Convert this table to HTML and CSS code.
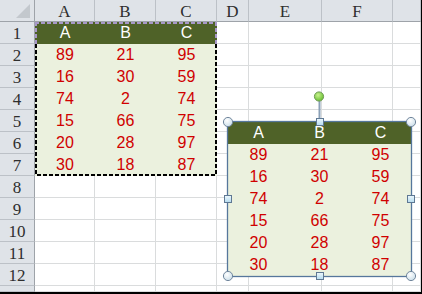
FILE: index.html
```html
<!DOCTYPE html>
<html>
<head>
<meta charset="utf-8">
<link rel="stylesheet" href="styles.css">
</head>
<body>
<div class="sheet">
  <div class="hd corner"><svg class="tri" width="15" height="14" viewBox="0 0 15 14"><polygon points="14,0 14,14 0,14" fill="#c3c8cd"/></svg></div>
  <div class="hd">A</div><div class="hd">B</div><div class="hd">C</div><div class="hd">D</div><div class="hd">E</div><div class="hd">F</div><div class="hd"></div>

  <div class="range">
    <div class="th">A</div><div class="th">B</div><div class="th">C</div>
    <div class="td">89</div><div class="td">21</div><div class="td">95</div>
    <div class="td">16</div><div class="td">30</div><div class="td">59</div>
    <div class="td">74</div><div class="td">2</div><div class="td">74</div>
    <div class="td">15</div><div class="td">66</div><div class="td">75</div>
    <div class="td">20</div><div class="td">28</div><div class="td">97</div>
    <div class="td">30</div><div class="td">18</div><div class="td">87</div>
    <svg class="ants" width="182" height="154" viewBox="0 0 182 154">
      <g fill="none" stroke-width="2" stroke-dasharray="4 2">
        <path d="M0 1 H182 M1 0 V22 M181 0 V22" stroke="#a898c8"/>
        <path d="M1 22 V153 H181 V22" stroke="#000"/>
      </g>
    </svg>
  </div>

  <div class="hd rh">1</div><div class="c"></div><div class="c"></div><div class="c"></div><div class="c"></div>
  <div class="hd rh">2</div><div class="c"></div><div class="c"></div><div class="c"></div><div class="c"></div>
  <div class="hd rh">3</div><div class="c"></div><div class="c"></div><div class="c"></div><div class="c"></div>
  <div class="hd rh">4</div><div class="c"></div><div class="c"></div><div class="c"></div><div class="c"></div>
  <div class="hd rh">5</div><div class="c"></div><div class="c"></div><div class="c"></div><div class="c"></div>
  <div class="hd rh">6</div><div class="c"></div><div class="c"></div><div class="c"></div><div class="c"></div>
  <div class="hd rh">7</div><div class="c"></div><div class="c"></div><div class="c"></div><div class="c"></div>
  <div class="hd rh">8</div><div class="c"></div><div class="c"></div><div class="c"></div><div class="c"></div><div class="c"></div><div class="c"></div><div class="c"></div>
  <div class="hd rh">9</div><div class="c"></div><div class="c"></div><div class="c"></div><div class="c"></div><div class="c"></div><div class="c"></div><div class="c"></div>
  <div class="hd rh">10</div><div class="c"></div><div class="c"></div><div class="c"></div><div class="c"></div><div class="c"></div><div class="c"></div><div class="c"></div>
  <div class="hd rh">11</div><div class="c"></div><div class="c"></div><div class="c"></div><div class="c"></div><div class="c"></div><div class="c"></div><div class="c"></div>
  <div class="hd rh">12</div><div class="c"></div><div class="c"></div><div class="c"></div><div class="c"></div><div class="c"></div><div class="c"></div><div class="c"></div>
  <div class="hd rh"></div><div class="c"></div><div class="c"></div><div class="c"></div><div class="c"></div><div class="c"></div><div class="c"></div><div class="c"></div>

  <div class="pic">
    <div class="th">A</div><div class="th">B</div><div class="th">C</div>
    <div class="td">89</div><div class="td">21</div><div class="td">95</div>
    <div class="td">16</div><div class="td">30</div><div class="td">59</div>
    <div class="td">74</div><div class="td">2</div><div class="td">74</div>
    <div class="td">15</div><div class="td">66</div><div class="td">75</div>
    <div class="td">20</div><div class="td">28</div><div class="td">97</div>
    <div class="td">30</div><div class="td">18</div><div class="td">87</div>
    <svg class="handles" width="203" height="198" viewBox="0 0 203 198">
      <defs>
        <radialGradient id="gc" cx="40%" cy="35%" r="70%">
          <stop offset="0" stop-color="#ffffff"/>
          <stop offset="1" stop-color="#c9dde8"/>
        </radialGradient>
        <linearGradient id="gs" x1="0" y1="0" x2="0" y2="1">
          <stop offset="0" stop-color="#eef8fd"/>
          <stop offset="1" stop-color="#b5dbee"/>
        </linearGradient>
        <radialGradient id="gg" cx="40%" cy="35%" r="70%">
          <stop offset="0" stop-color="#c8f28e"/>
          <stop offset="1" stop-color="#62bb2c"/>
        </radialGradient>
      </defs>
      <g transform="translate(10,34)">
        <rect x="-0.5" y="-0.5" width="184" height="155" fill="none" stroke="#56779c" stroke-width="1.3"/>
        <line x1="91.5" y1="-21" x2="91.5" y2="-4" stroke="#8aa0b7" stroke-width="2"/>
        <circle cx="91" cy="-25.5" r="4.6" fill="url(#gg)" stroke="#6f9a55" stroke-width="1"/>
        <g fill="url(#gc)" stroke="#71869c" stroke-width="1">
          <circle cx="0" cy="0" r="4.6"/>
          <circle cx="183" cy="0" r="4.6"/>
          <circle cx="0" cy="154" r="4.6"/>
          <circle cx="183" cy="154" r="4.6"/>
        </g>
        <g fill="url(#gs)" stroke="#5f7893" stroke-width="1">
          <rect x="88.5" y="-3.5" width="7" height="7"/>
          <rect x="-3.5" y="73.5" width="7" height="7"/>
          <rect x="179.5" y="73.5" width="7" height="7"/>
          <rect x="88.5" y="150.5" width="7" height="7"/>
        </g>
      </g>
    </svg>
  </div>
</div>
</body>
</html>
```
FILE: styles.css
```css
html, body {
  margin: 0;
  padding: 0;
}
body {
  background: #000;
  width: 422px;
  height: 294px;
  overflow: hidden;
}
.sheet {
  position: relative;
  display: grid;
  grid-template-columns: 35px 60px 61px 61px 32px 73px 71px 28px;
  grid-template-rows: repeat(13, 22px) 6px;
  width: 421px;
  height: 292px;
  background: #fff;
  overflow: hidden;
}
.c {
  border-right: 1px solid #dadcdd;
  border-bottom: 1px solid #dadcdd;
}
.hd {
  box-sizing: border-box;
  background: #dfe3e8;
  font-family: "Liberation Serif", serif;
  font-size: 17px;
  color: #2e2e2e;
  display: flex;
  align-items: center;
  justify-content: center;
  padding-top: 2px;
  border-right: 1px solid #bcc1c7;
  border-bottom: 1px solid #9ea3a9;
}
.rh {
  border-right: 1px solid #9ea3a9;
  border-bottom: 1px solid #bcc1c7;
  padding-top: 3px;
}
.corner {
  border-right: 1px solid #9ea3a9;
  align-items: flex-end;
  justify-content: flex-end;
  padding: 0 3px 3px 0;
}
.tri {
  display: block;
}
.range {
  grid-column: 2 / 5;
  grid-row: 2 / 9;
  position: relative;
  display: grid;
  grid-template-columns: 60px 61px 61px;
  grid-template-rows: repeat(7, 22px);
}
.th, .td {
  display: flex;
  align-items: center;
  justify-content: center;
  font-family: "Liberation Sans", Arial, sans-serif;
  font-size: 16px;
}
.th {
  background: #4f6228;
  color: #fff;
}
.td {
  background: #ebf1de;
  color: #d00000;
}
.ants {
  position: absolute;
  left: 0;
  top: 0;
}
.pic {
  position: absolute;
  left: 228px;
  top: 122px;
  width: 183px;
  height: 154px;
  display: grid;
  grid-template-columns: 61px 61px 61px;
  grid-template-rows: repeat(7, 22px);
}
.handles {
  position: absolute;
  left: -10px;
  top: -34px;
  overflow: visible;
}
```
